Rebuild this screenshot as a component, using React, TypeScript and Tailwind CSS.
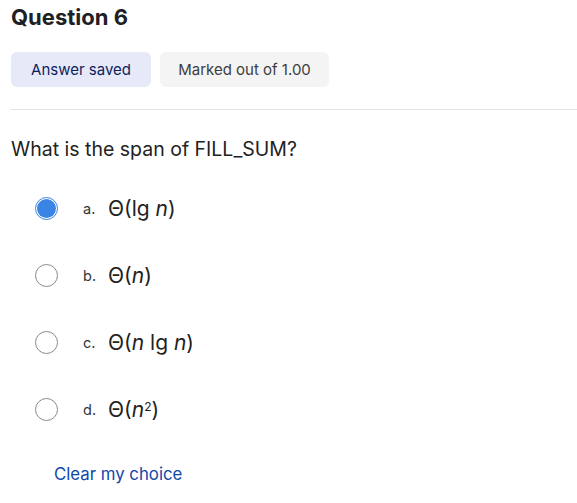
import React from 'react';

const options = [
  { key: 'a', math: <>Θ(lg <i>n</i>)</>, checked: true },
  { key: 'b', math: <>Θ(<i>n</i>)</>, checked: false },
  { key: 'c', math: <>Θ(<i>n</i> lg <i>n</i>)</>, checked: false },
  { key: 'd', math: <>Θ(<i>n</i><sup className="text-[12px]">2</sup>)</>, checked: false },
];

function Radio({ checked }: { checked: boolean }) {
  if (checked) {
    return (
      <span className="flex h-[23px] w-[23px] shrink-0 items-center justify-center rounded-full border border-[#3b82e6] bg-white">
        <span className="h-[19px] w-[19px] rounded-full bg-[#3a84e6]" />
      </span>
    );
  }
  return <span className="h-[23px] w-[23px] shrink-0 rounded-full border border-[#8a8a8a] bg-white" />;
}

export default function App() {
  return (
    <div className="min-h-screen bg-white pl-[11px] font-['Inter',sans-serif] text-[#1d2125]">
      <h3 className="pt-[4px] text-[22px] font-bold leading-[26px] text-[#1d2125]">Question 6</h3>

      <div className="mt-[22px] flex gap-[9px]">
        <div className="flex h-[35px] w-[140px] items-center justify-center rounded-md bg-[#e6e9f7] pt-[2px] text-[15px] text-[#0f1c5e]">
          Answer saved
        </div>
        <div className="flex h-[35px] w-[169px] items-center justify-center rounded-md bg-[#f4f4f4] pt-[2px] text-[15px] text-[#3d3d3d]">
          Marked out of 1.00
        </div>
      </div>

      <hr className="mt-[22px] border-t border-[#e2e2e2]" />

      <p className="mt-[26px] text-[19.5px] leading-[26px] text-[#222]">What is the span of FILL_SUM?</p>

      <div className="mt-[35px] flex flex-col gap-[44px] pl-[24px]">
        {options.map((o) => (
          <label key={o.key} className="flex h-[23px] items-center">
            <Radio checked={o.checked} />
            <span className="ml-[25px] w-[25px] text-[14.5px] text-[#333]">{o.key}.</span>
            <span className="text-[21px] text-[#222]">{o.math}</span>
          </label>
        ))}
      </div>

      <div className="mt-[41px] pl-[43px] text-[16.8px] text-[#0f47ad]">Clear my choice</div>
    </div>
  );
}
